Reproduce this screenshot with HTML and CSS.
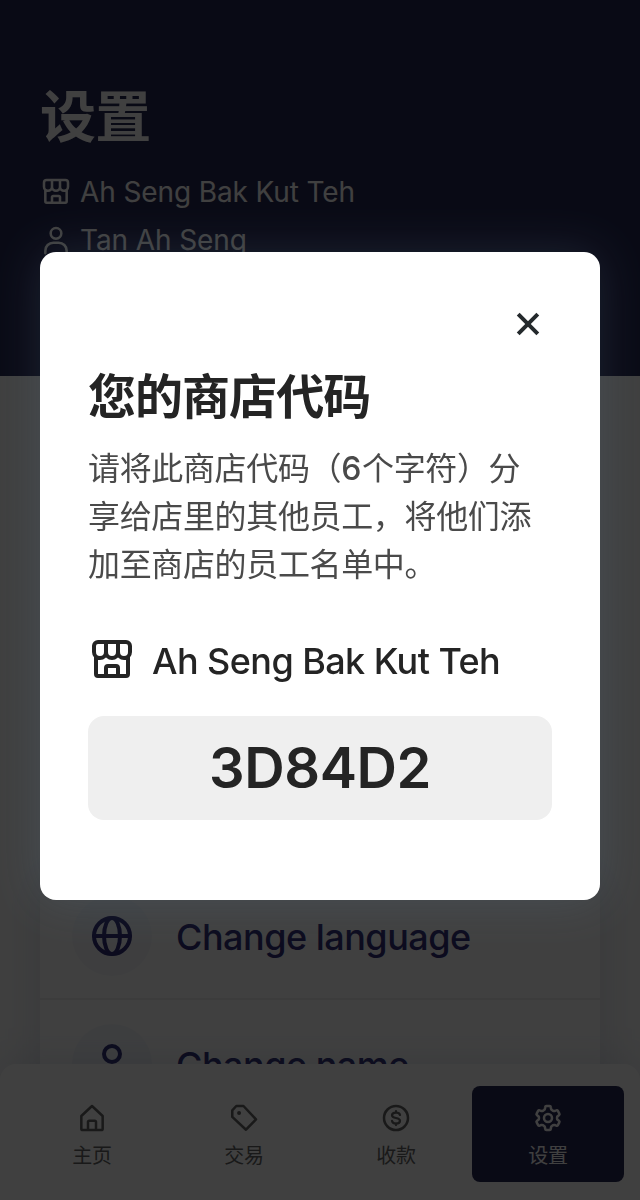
FILE: index.html
```html
<!DOCTYPE html>
<html lang="zh-CN">
<head>
<meta charset="utf-8">
<title>设置</title>
<link rel="stylesheet" href="styles.css">
</head>
<body>
<svg class="symbols" width="0" height="0">
  <symbol id="store" viewBox="0 0 24 24"><path d="M4 10.800V19a1 1 0 0 0 1 1h14a1 1 0 0 0 1-1v-8.200M9 20v-4a1 1 0 0 1 1-1h4a1 1 0 0 1 1 1v4M5 3h14a2 2 0 0 1 2 2v3a3 3 0 0 1-6 0 3 3 0 0 1-6 0 3 3 0 0 1-6 0V5a2 2 0 0 1 2-2zM9 3v5M15 3v5"/></symbol>
  <symbol id="person" viewBox="0 0 24 24"><circle cx="12" cy="7" r="4"/><path d="M4 22v-2a6 6 0 0 1 6-6h4a6 6 0 0 1 6 6v2"/></symbol>
</svg>
<div class="screen">
  <header class="header">
    <h1 class="title">设置</h1>
    <div class="meta"><svg class="icon-s"><use href="#store"/></svg><span>Ah Seng Bak Kut Teh</span></div>
    <div class="meta"><svg class="icon-s"><use href="#person"/></svg><span>Tan Ah Seng</span></div>
  </header>
  <main class="content">
    <section class="card">
      <div class="row"><span class="disc"><svg class="icon-l" viewBox="0 0 24 24"><circle cx="12" cy="12" r="9"/><ellipse cx="12" cy="12" rx="4" ry="9"/><path d="M3 12h18"/></svg></span><span class="row-label">Change language</span></div>
      <div class="row"><span class="disc"><svg class="icon-l"><use href="#person"/></svg></span><span class="row-label">Change name</span></div>
    </section>
  </main>
  <nav class="nav">
    <div class="tab"><svg class="icon-s" viewBox="0 0 24 24"><path d="M4 10.500 12 3l8 7.500V20a1 1 0 0 1-1 1H5a1 1 0 0 1-1-1zM9 21v-6a1 1 0 0 1 1-1h4a1 1 0 0 1 1 1v6"/></svg><span>主页</span></div>
    <div class="tab"><svg class="icon-s" viewBox="0 0 24 24"><path d="M3.200 6.200 6.200 3h5.400l9.400 10-7.500 7.800L3.200 11.200z"/><circle class="dot" cx="8.300" cy="8.300" r="1.500"/></svg><span>交易</span></div>
    <div class="tab"><svg class="icon-s" viewBox="0 0 24 24"><circle cx="12" cy="12" r="9"/><path class="dollar" d="M15 9.700C14.700 8.500 13.600 8 12 8c-1.700 0-3 .700-3 2s1.200 1.700 3 2 3 .800 3 2.100-1.300 2.100-3 2.100-2.800-.700-3-2M12 6.800V8M12 16v1.300"/></svg><span>收款</span></div>
    <div class="tab active"><svg class="icon-s" viewBox="0 0 24 24"><circle cx="12" cy="12" r="3"/><path d="M10.800 3h2.400q.8 0 .9.900l.2 1.200q.1.600.6.900l1 .6q.5.300 1.100.1l1.200-.4q.8-.3 1.200.4l1.100 2q.4.700-.3 1.200l-1 .8q-.4.400-.4 1v.6q0 .6.400 1l1 .8q.7.500.3 1.200l-1.100 2q-.4.700-1.200.4l-1.200-.4q-.6-.2-1.100.1l-1 .6q-.5.300-.6.900l-.2 1.200q-.1.900-.9.900h-2.400q-.8 0-.9-.9l-.2-1.200q-.1-.6-.6-.9l-1-.6q-.5-.3-1.100-.1l-1.200.4q-.8.300-1.200-.4l-1.100-2q-.4-.7.300-1.200l1-.8q.4-.4.400-1v-.6q0-.6-.4-1l-1-.8q-.7-.5-.3-1.200l1.100-2q.4-.7 1.200-.4l1.200.4q.6.200 1.100-.1l1-.6q.5-.3.6-.9l.2-1.200q.1-.9.900-.9z"/></svg><span>设置</span></div>
  </nav>
</div>
<div class="overlay">
  <div class="modal">
    <button class="close" aria-label="关闭"><svg class="icon-x" viewBox="0 0 48 48"><path d="m14.200 14.200 19.600 19.600m0-19.600-19.600 19.600"/></svg></button>
    <h2 class="modal-title">您的商店代码</h2>
    <p class="desc">请将此商店代码（<span class="num">6</span>个字符）分<br>享给店里的其他员工，将他们添<br>加至商店的员工名单中。</p>
    <div class="store"><svg class="icon-l"><use href="#store"/></svg><span class="store-name">Ah Seng Bak Kut Teh</span></div>
    <div class="code">3D84D2</div>
  </div>
</div>
</body>
</html>
```
FILE: styles.css
```css
* { box-sizing: border-box; margin: 0; }
body { width: 640px; height: 1200px; overflow: hidden; font-family: Inter, "Noto Sans CJK SC", sans-serif; }
svg { fill: none; stroke: currentColor; stroke-width: 2; stroke-linecap: round; stroke-linejoin: round; flex: none; }
.symbols { position: absolute; }
.icon-s { width: 32px; height: 32px; stroke-width: 1.9; }
.icon-l { width: 48px; height: 48px; }
.dot { fill: currentColor; stroke: none; }
.dollar { stroke-width: 1.7; }

.screen { height: 1200px; display: flex; flex-direction: column; background: #fbfbfb; }
.header { height: 376px; flex: none; padding: 81px 40px 0; background: #272854; color: #fff; }
.title { height: 72px; margin-bottom: 15px; font-size: 56px; line-height: 72px; font-weight: 700; letter-spacing: -0.015em; }
.meta { height: 48px; display: flex; align-items: center; gap: 8px; font-size: 28px; letter-spacing: -0.004em; }
.meta .icon-s { margin-top: -1px; }
.content { height: 688px; flex: none; padding: 0 40px; overflow: hidden; }
.card { margin-top: 496px; background: #fff; box-shadow: 0 0 40px rgba(99, 122, 158, .18); }
.row { height: 128px; padding: 2px 32px 0; display: flex; align-items: center; gap: 24px; color: #302f78; font-size: 36px; font-weight: 500; letter-spacing: -0.014em; border-bottom: 2px solid #efefef; }
.row-label { padding-top: 2px; }
.disc { width: 80px; height: 80px; border-radius: 50%; background: #f5f8fc; display: flex; align-items: center; justify-content: center; }
.nav { height: 136px; flex: none; padding: 22px 16px 18px; display: grid; grid-template-columns: repeat(4, 1fr); background: #fff; border-radius: 16px 16px 0 0; box-shadow: 0 0 40px rgba(99, 122, 158, .2); }
.tab { padding-top: 16px; display: flex; flex-direction: column; align-items: center; gap: 2px; border-radius: 8px; color: #666; font-size: 20px; line-height: 40px; letter-spacing: -0.011em; }
.tab.active { background: #272854; color: #fff; }

.overlay { position: fixed; inset: 0; padding: 252px 40px 0; background: rgba(0, 0, 0, .75); }
.modal { height: 648px; padding: 48px; display: flex; flex-direction: column; background: #fff; border-radius: 16px; box-shadow: 0 0 48px rgba(99, 130, 158, .22); color: #242424; }
.close { align-self: flex-end; width: 48px; height: 48px; padding: 0; border: 0; background: none; color: #24292c; }
.icon-x { display: block; width: 48px; height: 48px; stroke-width: 4; stroke-linecap: butt; }
.modal-title { margin-top: 17px; font-size: 48px; line-height: 64px; font-weight: 700; letter-spacing: -0.02em; }
.desc { margin-top: 16px; font-size: 32px; line-height: 48px; letter-spacing: -0.011em; color: #4a4a4a; white-space: nowrap; }
.num { font-weight: 500; letter-spacing: 0.02em; }
.store { margin-top: 47px; height: 48px; display: flex; align-items: center; gap: 16px; font-size: 36px; font-weight: 500; letter-spacing: -0.016em; }
.store-name { padding-top: 2px; }
.code { margin-top: 32px; height: 104px; border-radius: 16px; background: #efefef; text-align: center; font-size: 56px; line-height: 104px; font-weight: 600; letter-spacing: -0.008em; }
```
